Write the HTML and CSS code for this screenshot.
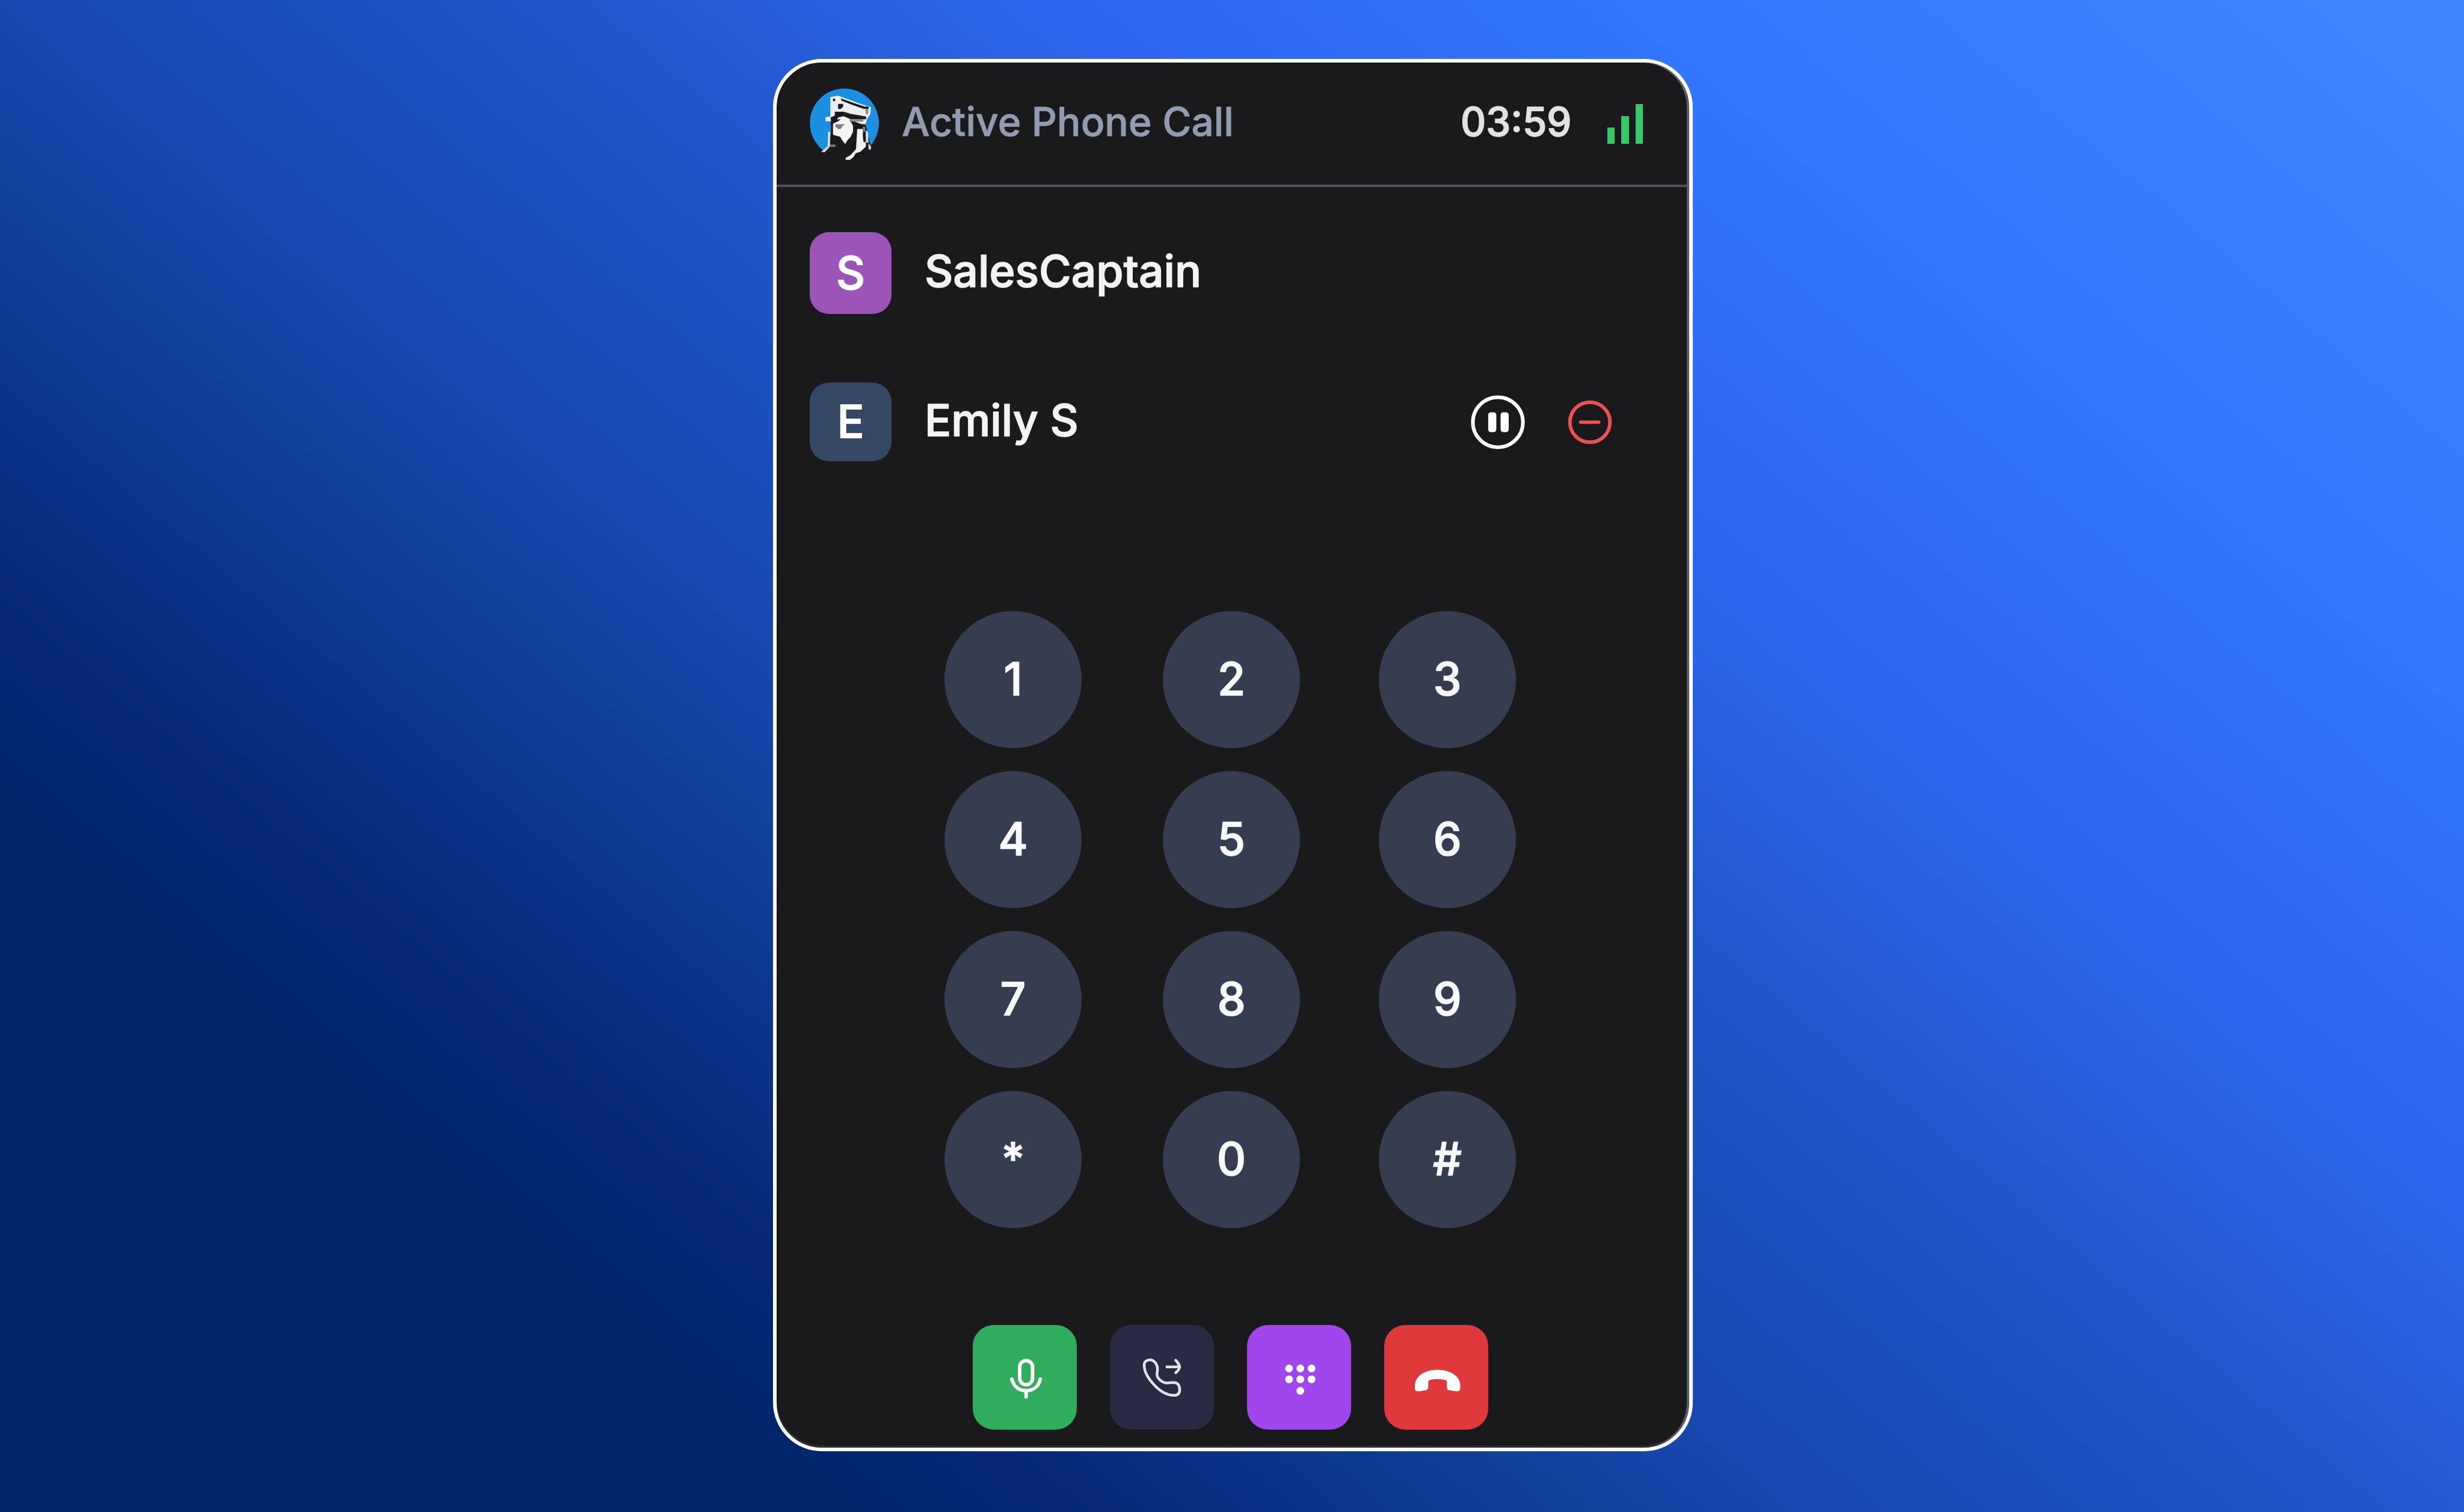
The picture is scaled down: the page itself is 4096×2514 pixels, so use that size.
FILE: index.html
```html
<!DOCTYPE html>
<html lang="en">
<head>
<meta charset="utf-8">
<title>Active Phone Call</title>
<link rel="stylesheet" href="styles.css">
</head>
<body>
<main class="phone">
  <header class="header">
    <svg class="logo" viewBox="72 50 463 463">
      <circle cx="304" cy="282" r="231" fill="#1b90e2"/>
      <path fill="#1a191b" d="M150 476L205 438L214 340L212 262L440 250L458 350L484 446Q440 520 330 540Q220 530 150 476Z"/>
      <path fill="#ededef" d="M210 108L262 98L345 130L425 158L482 176L478 222L456 254L444 300L350 262L232 252L214 270L178 268L178 242L210 238Z"/>
      <path fill="#1a191b" d="M228 118H242V136H228ZM280 116L372 150L440 172H466V188L430 186L350 158L285 132ZM262 154H296V172L280 188H262ZM240 206L300 206L345 220L450 238V256L345 256L300 236L262 244L246 272L214 268L212 244L240 232Z"/>
      <path fill="#8b8a8d" d="M345 256H430V272H345ZM444 186H464V222H448Z"/>
      <path fill="#f4f4f5" d="M228 286L262 270L295 244L330 250L346 272L362 300V340L345 376L326 394L310 422L290 398L276 374L228 360Z"/>
      <path fill="#7d7c80" d="M244 290H310L290 304L280 322L262 322L244 306Z"/>
      <path fill="#1a191b" d="M224 376H262L292 400L272 404L244 426H224ZM362 290H444V400H432V306H398V324H380Z"/>
      <path fill="#f2f2f3" d="M390 322H428V376L432 408L448 410V440L412 474L380 484L366 508L342 528H312V516L346 496L382 456Z"/>
      <path fill="#d4d6da" d="M194 342L210 340L208 440L172 478L148 474L192 438ZM446 330L462 344L466 420L484 440L480 460H466L464 412H448Z"/>
      <path fill="#7d7c80" d="M208 426H244V442H212ZM426 306H444V340H430Z"/>
    </svg>
    <h1 class="title">Active Phone Call</h1>
    <time class="timer">03:59</time>
    <div class="signal"><i class="bar bar-low"></i><i class="bar bar-mid"></i><i class="bar bar-high"></i></div>
  </header>

  <section class="people">
    <div class="person">
      <span class="badge badge-purple">S</span>
      <span class="name">SalesCaptain</span>
    </div>
    <div class="person person-guest">
      <span class="badge badge-navy">E</span>
      <span class="name">Emily S</span>
      <svg class="pause" viewBox="0 0 120 120">
        <circle cx="60" cy="60" r="55.5" fill="none" stroke="#fff" stroke-width="8"/>
        <rect x="38.500" y="38" width="18" height="44" rx="6" fill="#fff"/>
        <rect x="66" y="38" width="18" height="44" rx="6" fill="#fff"/>
      </svg>
      <svg class="remove" viewBox="0 0 100 100">
        <circle cx="50" cy="50" r="45" fill="none" stroke="#ec5053" stroke-width="8"/>
        <path d="M29 50H70" stroke="#f25356" stroke-width="7.5" stroke-linecap="round"/>
      </svg>
    </div>
  </section>

  <section class="keypad">
    <button class="key">1</button><button class="key">2</button><button class="key">3</button>
    <button class="key">4</button><button class="key">5</button><button class="key">6</button>
    <button class="key">7</button><button class="key">8</button><button class="key">9</button>
    <button class="key">*</button><button class="key">0</button><button class="key">#</button>
  </section>

  <footer class="actions">
    <button class="action mute">
      <svg viewBox="0 0 234 234" fill="none" stroke="#fff" stroke-width="8" stroke-linecap="round">
        <rect x="105.500" y="79.500" width="29" height="54" rx="14.500"/>
        <path d="M88 121C92 138 104 147 120 147S148 138 152 121M120 147V161"/>
      </svg>
    </button>
    <button class="action transfer">
      <svg viewBox="0 0 130 130" fill="none" stroke="#e3e4ea" stroke-width="6" stroke-linecap="round" stroke-linejoin="round">
        <path d="M23 39C23 31 29 27 36 27S50 33 52 41C55 50 51 55 52 62C53 69 63 78 71 79C79 80 86 77 93 78.500C100 80 103 87 103 94C103 103 98 107 90 107C71 107 57 96 45 83C33 70 23 55 23 39Z"/>
        <path d="M74 43H101M94 28Q101 35 103 43Q101 51 94 56"/>
      </svg>
    </button>
    <button class="action dialpad">
      <svg viewBox="0 0 234 234" fill="#fff">
        <circle cx="94.500" cy="97" r="8.700"/><circle cx="119.700" cy="97" r="8.700"/><circle cx="145" cy="97" r="8.700"/>
        <circle cx="94.500" cy="121.500" r="8.700"/><circle cx="119.700" cy="121.500" r="8.700"/><circle cx="145" cy="121.500" r="8.700"/>
        <circle cx="119.700" cy="147.500" r="8.700"/>
      </svg>
    </button>
    <button class="action hangup">
      <svg viewBox="0 0 234 234" fill="#fff">
        <path d="M69 135C69 114 92 100 119.500 100S171 114 171 135V141C171 147 167 149 162 148.500L148 146.500C143 146 141 143 141 138V127Q141 124 137 123Q120 119 103 123Q99 124 99 127V138C99 143 97 146 92 146.500L78 148.500C72 149 69 147 69 141Z"/>
      </svg>
    </button>
  </footer>
</main>
</body>
</html>
```
FILE: styles.css
```css
* { box-sizing: border-box; margin: 0; }

body {
  width: 4096px;
  height: 2514px;
  padding-top: 98px;
  overflow: hidden;
  font-family: Inter, "Liberation Sans", sans-serif;
  font-weight: 500;
  background: linear-gradient(40deg, #00256b 0%, #00256b 20%, #08297a 26%, #0e3a93 34%, #1748ae 42%, #1c50be 50%, #2259d0 57%, #2c66ec 66%, #2f6bf5 72%, #3377fd 80%, #3a7eff 90%, #3f85ff 100%);
}

button { padding: 0; border: 0; font: inherit; color: inherit; }

.phone {
  display: flex;
  flex-direction: column;
  width: 1529px;
  height: 2315px;
  margin-left: 1285px;
  border: 6px solid #fff;
  border-radius: 81px;
  background: #1a191b;
  box-shadow: inset -4px 0 0 #595a6a, inset 0 -4px 0 #2b2b2d;
}

.header {
  display: flex;
  align-items: center;
  height: 207px;
  padding: 0 73px 0 55px;
  margin-right: 4px;
  border-bottom: 4px solid #50505b;
}
.logo { width: 115px; height: 115px; margin-bottom: 2px; overflow: visible; }
.title {
  flex: 1;
  padding-bottom: 7px;
  margin-left: 38px;
  font-size: 65.8px;
  font-weight: 500;
  color: #919cae;
  -webkit-text-stroke: 0.8px;
}
.timer { padding-bottom: 7px; font-size: 65.3px; color: #e2e2e6; -webkit-text-stroke: 1.5px; }
.signal { display: flex; align-items: flex-end; gap: 11px; height: 66px; margin-left: 59px; }
.bar { width: 12.5px; background: #35c96a; }
.bar-low { height: 27px; }
.bar-mid { height: 46px; }
.bar-high { height: 66px; }

.people { padding: 75px 128px 0 55px; }
.person { display: flex; align-items: center; height: 136px; }
.person-guest { height: 131px; margin-top: 114px; }
.badge {
  display: flex;
  align-items: center;
  justify-content: center;
  width: 136px;
  height: 100%;
  padding-bottom: 2px;
  border-radius: 32px;
  font-size: 75px;
  color: #fff;
  -webkit-text-stroke: 1.5px;
}
.badge-purple { background: #9b55b7; }
.badge-navy { background: #344866; }
.name {
  flex: 1;
  padding-bottom: 8px;
  margin-left: 55px;
  font-size: 73.3px;
  color: #f3f3f5;
  -webkit-text-stroke: 1.5px;
}
.person-guest .name { padding-bottom: 6px; }
.pause { width: 90px; height: 90px; }
.remove { width: 74px; height: 74px; margin-left: 71px; }

.keypad {
  display: grid;
  grid-template-columns: 363px 359px 228px;
  row-gap: 38px;
  margin: 249px 0 0 279px;
}
.key {
  width: 228px;
  height: 228px;
  padding-bottom: 3px;
  border-radius: 50%;
  background: #373d51;
  font-size: 75px;
  color: #f8fafc;
  -webkit-text-stroke: 1.5px;
}

.actions { display: flex; gap: 55px; margin: 161px 0 0 326px; }
.action { width: 173px; height: 174px; border-radius: 35px; }
.action svg { display: block; width: 173px; height: 174px; }
.mute { background: #2fac5c; }
.transfer { display: flex; align-items: center; justify-content: center; background: #292b42; }
.transfer svg { width: 96px; height: 96px; margin: 0 0 3px 3px; }
.dialpad { background: #a047eb; }
.hangup { background: #df3a3b; }
```
